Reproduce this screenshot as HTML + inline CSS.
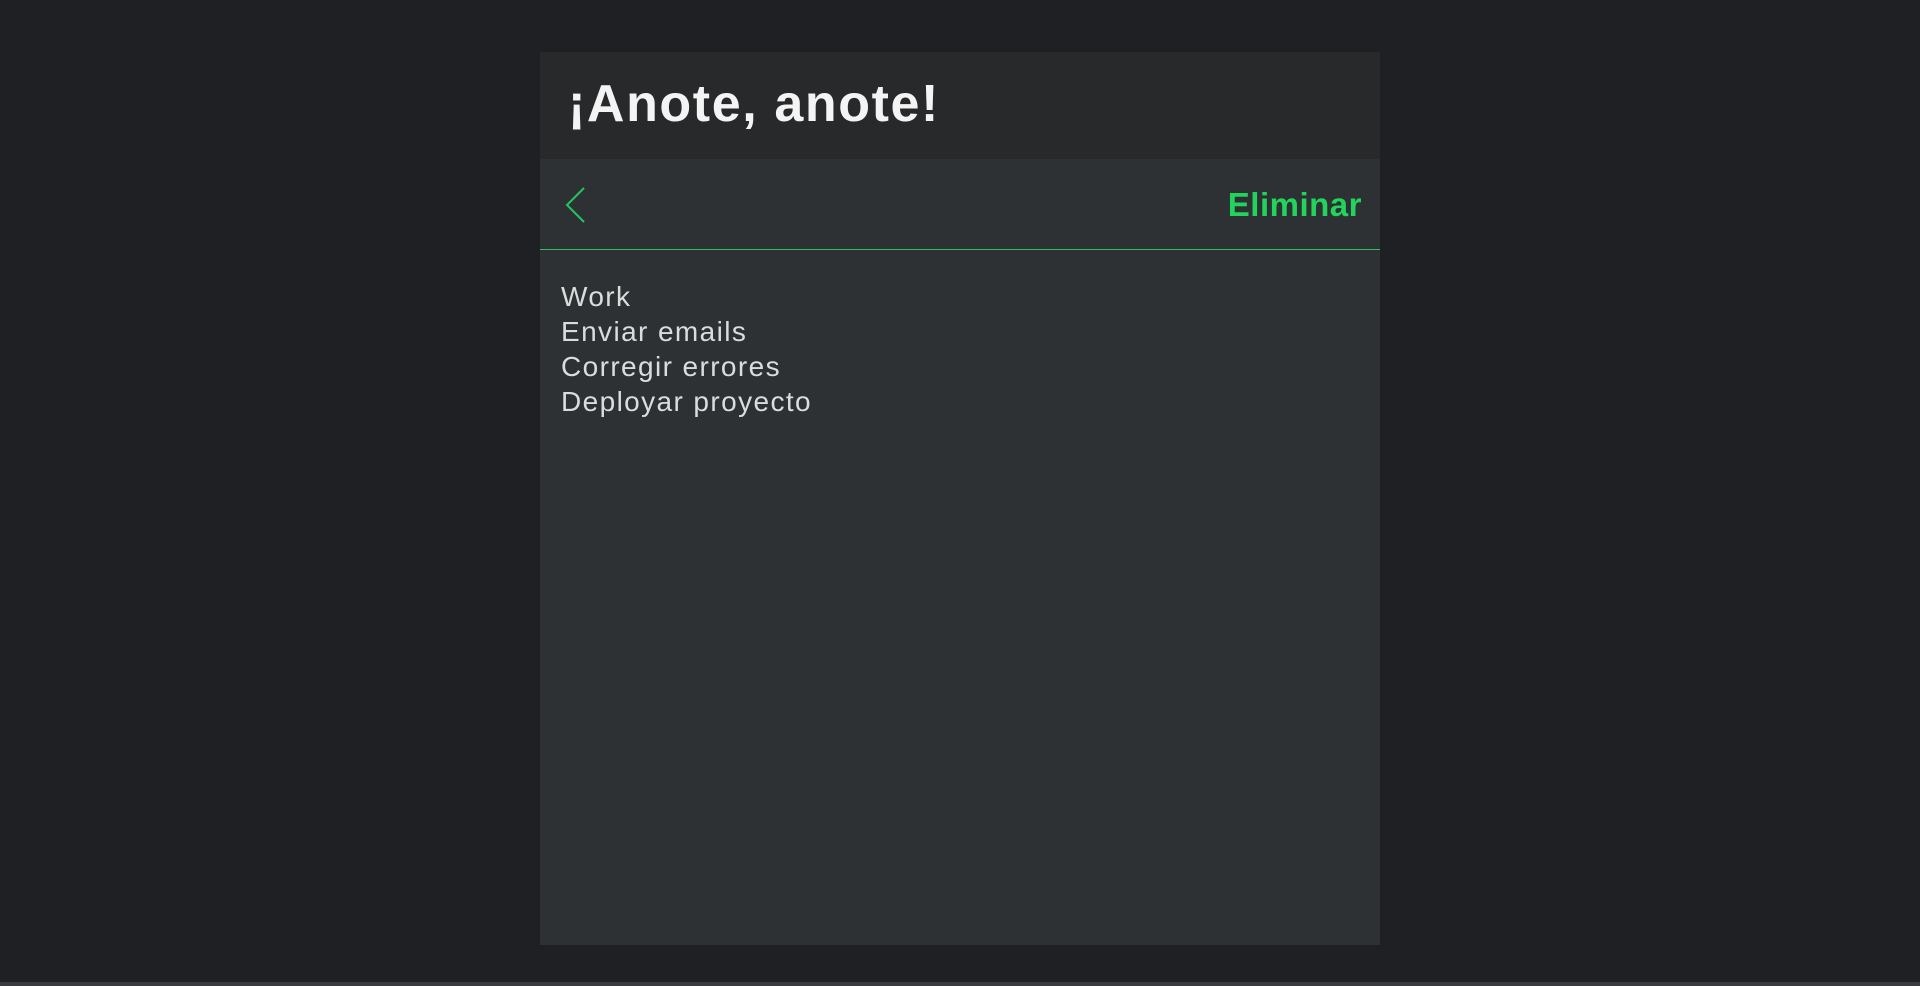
<!DOCTYPE html>
<html><head><style>
body{margin:0;width:1920px;height:986px;background:#1f2024;font-family:"Liberation Sans",sans-serif;overflow:hidden;position:relative}
.panel{position:absolute;left:540px;top:52px;width:840px;height:893px;background:#2e3134}
.head{height:107px;background:#28292b;position:relative}
.head h1{margin:0;position:absolute;left:28px;top:22px;font-size:52px;font-weight:bold;color:#f4f4f4;letter-spacing:1.6px}
.bar{height:90px;position:relative}
.line{position:absolute;left:0;right:0;top:197px;height:1px;background:#22c55e}
.del{position:absolute;right:18px;top:27px;font-size:33px;font-weight:bold;color:#22d35c;letter-spacing:0.5px}
.list{position:absolute;left:21px;top:227px;font-size:28px;line-height:35px;color:#dcdcdc;letter-spacing:1.4px}
.bot{position:absolute;left:0;right:0;top:982px;height:4px;background:#3a3b3e}
</style></head><body>
<div class="panel">
<div class="head"><h1>¡Anote, anote!</h1></div>
<div class="bar">
<svg style="position:absolute;left:24px;top:27px" width="24" height="38" viewBox="0 0 24 38"><path d="M20 2 L3 19 L20 36" fill="none" stroke="#22c55e" stroke-width="2"/></svg>
<div class="del">Eliminar</div>
</div>
<div class="line"></div>
<div class="list">Work<br>Enviar emails<br>Corregir errores<br>Deployar proyecto</div>
</div>
<div class="bot"></div>
</body></html>
